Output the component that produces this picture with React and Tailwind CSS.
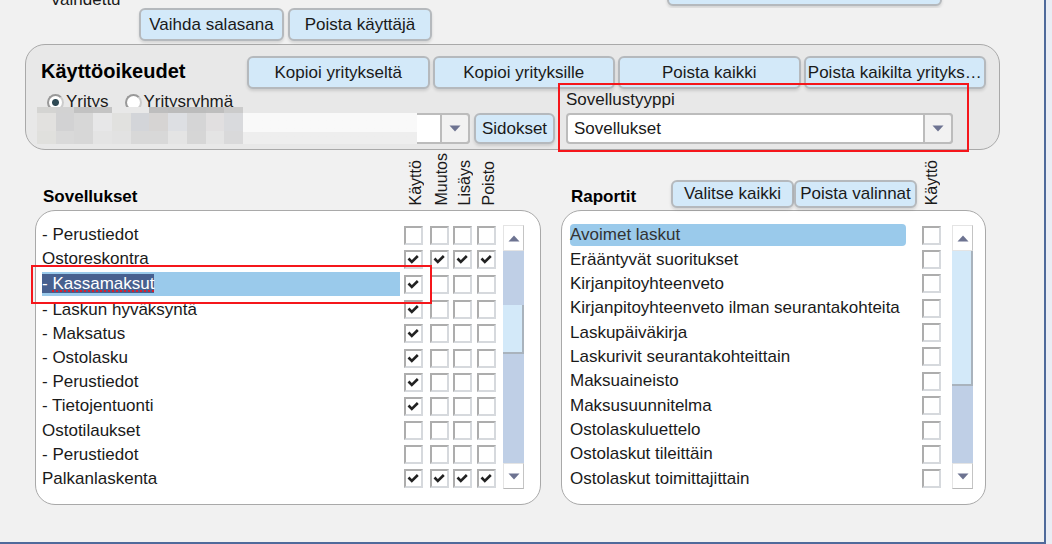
const apps = [
  { name: '- Perustiedot', rights: [0, 0, 0, 0] },
  { name: 'Ostoreskontra', rights: [1, 1, 1, 1] },
  { name: '- Kassamaksut', rights: [1, 0, 0, 0], selected: true },
  { name: '- Laskun hyväksyntä', rights: [1, 0, 0, 0] },
  { name: '- Maksatus', rights: [1, 0, 0, 0] },
  { name: '- Ostolasku', rights: [1, 0, 0, 0] },
  { name: '- Perustiedot', rights: [1, 0, 0, 0] },
  { name: '- Tietojentuonti', rights: [1, 0, 0, 0] },
  { name: 'Ostotilaukset', rights: [0, 0, 0, 0] },
  { name: '- Perustiedot', rights: [0, 0, 0, 0] },
  { name: 'Palkanlaskenta', rights: [1, 1, 1, 1] },
];

const reports = [
  'Avoimet laskut',
  'Erääntyvät suoritukset',
  'Kirjanpitoyhteenveto',
  'Kirjanpitoyhteenveto ilman seurantakohteita',
  'Laskupäiväkirja',
  'Laskurivit seurantakohteittain',
  'Maksuaineisto',
  'Maksusuunnitelma',
  'Ostolaskuluettelo',
  'Ostolaskut tileittäin',
  'Ostolaskut toimittajittain',
];

const rightNames = ['Käyttö', 'Muutos', 'Lisäys', 'Poisto'];

// blocks hiding the company name, one row of colours per line
const mosaic = [
  ['bg-[#d4d4d2]', 'bg-[#d2d2d2]', 'bg-[#c2c2c2]', 'bg-[#c4c4c4]', 'bg-[#e8e8e8]', 'bg-[#e8e8e8]', 'bg-[#bebebe]', 'bg-[#bcbcbc]', 'bg-[#bcbcbc]', 'bg-[#bebebe]', 'bg-[#cbcbcb]'],
  ['bg-[#e2e1df]', 'bg-[#d2d2d3]', 'bg-[#d7d7d7]', 'bg-[#e7e7e8]', 'bg-[#e1e1df]', 'bg-[#d3d5d9]', 'bg-[#d6d4d3]', 'bg-[#dddfe3]', 'bg-[#d5d5d6]', 'bg-[#e1dfe0]', 'bg-[#d9dadd]'],
  ['bg-[#e0e0dd]', 'bg-[#d9d9d9]', 'bg-[#d7d7d7]', 'bg-[#e4e4e4]', 'bg-[#e2e2e2]', 'bg-[#d8d8d8]', 'bg-[#d8d8d8]', 'bg-[#e4e4e4]', 'bg-[#d6d6d6]', 'bg-[#e4e4e4]', 'bg-[#d9d9da]'],
];

function Button({ className = '', children }) {
  return (
    <button
      type="button"
      className={`truncate rounded-md border-2 border-[#b5b9bd] bg-[#d3e9f9] text-center shadow-[0_2px_3px_rgba(0,0,0,0.12)] ${className}`}
    >
      {children}
    </button>
  );
}

function Triangle({ up }) {
  return (
    <svg viewBox="0 0 12 7" className="h-[7px] w-3" fill="#6d7391" aria-hidden="true">
      <path d={up ? 'M0.5 6.5 6 0.5 11.5 6.5Z' : 'M0.5 0.5H11.5L6 6.5Z'} />
    </svg>
  );
}

function Check({ label, checked }) {
  return (
    <span className="relative block size-[19px]">
      <input
        type="checkbox"
        aria-label={label}
        defaultChecked={checked}
        className="peer block size-[19px] appearance-none border-2 border-t-[#adadad] border-r-[#d6d9dd] border-b-[#d6d9dd] border-l-[#adadad] bg-white"
      />
      <svg
        viewBox="0 0 19 19"
        className="pointer-events-none absolute inset-0 hidden size-[19px] peer-checked:block"
        fill="none"
        stroke="#222"
        strokeWidth="2.6"
        aria-hidden="true"
      >
        <path d="M4.5 8.5 7.8 12 13.8 6" />
      </svg>
    </span>
  );
}

function Radio({ label, checked }) {
  return (
    <label className="flex items-center gap-0.5">
      <input
        type="radio"
        name="scope"
        defaultChecked={checked}
        className="size-[17px] appearance-none rounded-full border-2 border-t-[#999] border-r-[#ccc] border-b-[#ccc] border-l-[#999] bg-white checked:bg-[radial-gradient(circle,#2f4a55_3px,#fff_4px)]"
      />
      {label}
    </label>
  );
}

function Combo({ id, label, value }) {
  return (
    <div className="relative h-[31px] w-full">
      <select
        id={id}
        aria-label={label}
        className="h-full w-full appearance-none rounded-sm border-2 border-[#bcbcbc] bg-white pl-1.5"
      >
        <option>{value}</option>
      </select>
      <span className="pointer-events-none absolute inset-y-0 right-0 flex w-[30px] items-center justify-center rounded-r-sm border-2 border-[#bcbcbc] bg-[#f2f2f2]">
        <Triangle />
      </span>
    </div>
  );
}

function Scrollbar({ thumb }) {
  return (
    <div className="my-[2px] flex w-[21px] shrink-0 flex-col bg-[#bfcfe6]">
      <button type="button" aria-label="Ylös" className="flex h-[26px] shrink-0 items-center justify-center border border-[#e4e4e4] border-r-[#c4c4c4] bg-white">
        <Triangle up />
      </button>
      <div className="flex-1">
        <div className={`border-r-2 border-b-2 border-[#a9b3bd] bg-[#d3e9f9] ${thumb}`} />
      </div>
      <button type="button" aria-label="Alas" className="flex h-[26px] shrink-0 items-center justify-center border border-[#e4e4e4] border-r-[#c4c4c4] border-b-[#b8b8b8] bg-white">
        <Triangle />
      </button>
    </div>
  );
}

function ColumnTitle({ children }) {
  return <span className="block rotate-180 pt-px text-base leading-[22px] [writing-mode:vertical-rl]">{children}</span>;
}

function RightsPanel() {
  return (
    <section className="rounded-[20px] border border-[#a9a9a9] bg-[#e8e8e8] pt-[11px] pr-[13px] pb-[5px] pl-[15px]">
      <div className="flex items-start">
        <h2 className="w-[206px] shrink-0 pt-0.5 text-[20px] leading-[26px] font-bold text-black">Käyttöoikeudet</h2>
        <div className="grid flex-1 grid-cols-4 gap-[3px]">
          <Button className="h-[33px]">Kopioi yritykseltä</Button>
          <Button className="h-[33px]">Kopioi yrityksille</Button>
          <Button className="h-[33px]">Poista kaikki</Button>
          <Button className="h-[33px]">Poista kaikilta yrityks…</Button>
        </div>
      </div>

      <div className="flex">
        <div className="relative w-[429px]">
          <div className="flex h-[26px] items-center gap-4 pl-1.5">
            <Radio label="Yritys" checked />
            <Radio label="Yritysryhmä" />
          </div>
          <div className="-mt-0.5">
            <Combo label="Yritys" value="" />
          </div>
          <div className="absolute bottom-0 -left-1 flex h-[37px] w-[380px]">
            <div className="grid w-[206px] grid-cols-11 grid-rows-[6px_18px_13px]">
              {mosaic.flat().map((color, i) => (
                <span key={i} className={color} />
              ))}
            </div>
            <div className="mt-1.5 flex-1 bg-linear-to-b from-[#f9f9f9] from-60% to-[#eeeeee] to-60%" />
          </div>
        </div>
        <Button className="ml-1 h-[31px] w-[81px] self-end">Sidokset</Button>
        <div className="relative ml-[11px] w-[387px]">
          <label htmlFor="app-type" className="block h-6 leading-[22px]">Sovellustyyppi</label>
          <Combo id="app-type" value="Sovellukset" />
          <div className="pointer-events-none absolute -top-[6px] -right-4 -bottom-2 -left-2 border-2 border-[#f5161b]" />
        </div>
      </div>
    </section>
  );
}

function AppList() {
  return (
    <section className="w-0 grow-[506]">
      <div className="flex h-[60px] items-end pr-11 pb-1 pl-2">
        <h3 className="flex-1 leading-[19px] font-bold text-black">Sovellukset</h3>
        <div className="grid grid-cols-[26px_23px_24px_19px]">
          {rightNames.map((name) => (
            <ColumnTitle key={name}>{name}</ColumnTitle>
          ))}
        </div>
      </div>
      <div className="relative flex gap-[7px] rounded-[20px] border border-[#a9a9a9] bg-white pt-3 pr-4 pb-[13px] pl-1.5">
        <table className="h-[268px] flex-1 table-fixed border-collapse">
          <colgroup>
            <col />
            <col className="w-[26px]" />
            <col className="w-[23px]" />
            <col className="w-6" />
            <col className="w-[19px]" />
          </colgroup>
          <tbody>
            {apps.map((app, row) => (
              <tr key={row}>
                <td className="p-0 pr-1">
                  {app.selected ? (
                    <div className="bg-[#9acaeb] leading-6">
                      <span className="bg-[#47608f] text-white">
                        - <span className="underline decoration-[#d8202f] decoration-dotted decoration-2">Kassamaksut</span>
                      </span>
                    </div>
                  ) : (
                    app.name
                  )}
                </td>
                {app.rights.map((on, i) => (
                  <td key={i} className="p-0">
                    <Check label={`${app.name} ${rightNames[i]}`} checked={on === 1} />
                  </td>
                ))}
              </tr>
            ))}
          </tbody>
        </table>
        <Scrollbar thumb="mt-[54px] h-[49px]" />
        <div className="pointer-events-none absolute top-[54px] right-[108px] -left-[5px] h-[39px] border-2 border-[#f5161b]" />
      </div>
    </section>
  );
}

function ReportList() {
  return (
    <section className="w-0 grow-[425]">
      <div className="flex h-[60px] items-end pr-[43px] pb-0.5 pl-2.5">
        <h3 className="flex-1 pb-0.5 leading-[19px] font-bold text-black">Raportit</h3>
        <Button className="h-7 w-[123px]">Valitse kaikki</Button>
        <Button className="h-7 w-[123px]">Poista valinnat</Button>
        <div className="ml-1 pb-0.5">
          <ColumnTitle>Käyttö</ColumnTitle>
        </div>
      </div>
      <div className="flex gap-2.5 rounded-[20px] border border-[#a9a9a9] bg-white pt-3 pr-3 pb-[13px] pl-2">
        <table className="h-[268px] flex-1 table-fixed border-collapse">
          <colgroup>
            <col />
            <col className="w-5" />
          </colgroup>
          <tbody>
            {reports.map((name, row) => (
              <tr key={name}>
                <td className="p-0 pr-4 whitespace-nowrap">
                  <div className={row === 0 ? 'rounded-sm bg-[#9acaeb] text-[#333]' : ''}>{name}</div>
                </td>
                <td className="p-0">
                  <Check label={`${name} Käyttö`} />
                </td>
              </tr>
            ))}
          </tbody>
        </table>
        <Scrollbar thumb="h-[135px]" />
      </div>
    </section>
  );
}

export default function App() {
  return (
    <div className="min-h-screen bg-[#e9edf4] pr-1.5 font-['Liberation_Sans',Arial,sans-serif] text-[17px] leading-[22px] text-[#1a1a1a]">
      <main className="border-r-2 border-b-2 border-[#4f6a9b] bg-[#f1f1f1] pr-11 pb-[37px] pl-[25px]">
        <div className="flex h-2 items-start justify-between overflow-hidden pr-[58px] pl-[25px]">
          <span className="-mt-[10px] leading-5">Vaihdettu</span>
          <Button className="-mt-[27px] h-[33px] w-[275px]">&nbsp;</Button>
        </div>
        <div className="flex gap-1 pb-[3px] pl-[114px]">
          <Button className="h-[33px] w-[145px]">Vaihda salasana</Button>
          <Button className="h-[33px] w-36">Poista käyttäjä</Button>
        </div>
        <RightsPanel />
        <div className="flex gap-5 pr-3.5 pl-2.5">
          <AppList />
          <ReportList />
        </div>
      </main>
    </div>
  );
}
